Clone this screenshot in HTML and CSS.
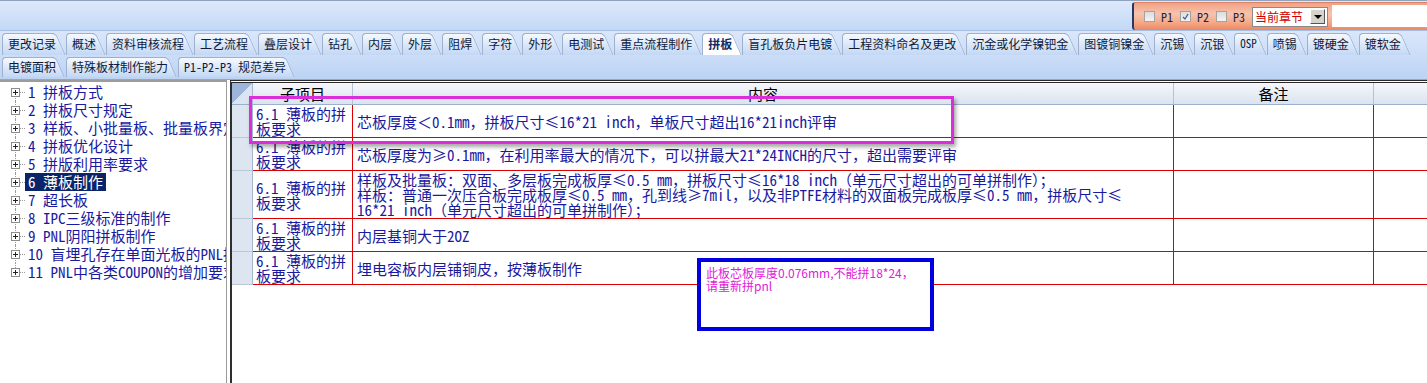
FILE: index.html
```html
<!DOCTYPE html>
<html lang="zh-CN">

<head>
    <meta charset="UTF-8">
    <title>拼板</title>
    <link rel="stylesheet" href="styles.css">
</head>

<body>
    <div class="topbar">
        <div class="filter">
            <label class="chk"><span class="box"></span><span class="en">P1</span></label>
            <label class="chk"><span class="box checked"><svg viewBox="0 0 9 9" width="9" height="9"><polyline points="2,5 4,7 7,2" fill="none" stroke="#4a5f8a" stroke-width="1.3"/></svg></span><span class="en">P2</span></label>
            <label class="chk"><span class="box"></span><span class="en">P3</span></label>
            <div class="chapter"><span>当前章节</span><span class="drop"></span></div>
            <div class="search"></div>
        </div>
    </div>

    <div class="tabs">
        <div class="tab-row">
            <span class="tab">更改记录</span>
            <span class="tab">概述</span>
            <span class="tab">资料审核流程</span>
            <span class="tab">工艺流程</span>
            <span class="tab">叠层设计</span>
            <span class="tab">钻孔</span>
            <span class="tab">内层</span>
            <span class="tab">外层</span>
            <span class="tab">阻焊</span>
            <span class="tab">字符</span>
            <span class="tab">外形</span>
            <span class="tab">电测试</span>
            <span class="tab">重点流程制作</span>
            <span class="tab active">拼板</span>
            <span class="tab">盲孔板负片电镀</span>
            <span class="tab">工程资料命名及更改</span>
            <span class="tab">沉金或化学镍钯金</span>
            <span class="tab">图镀铜镍金</span>
            <span class="tab">沉锡</span>
            <span class="tab">沉银</span>
            <span class="tab small"><span class="en">OSP</span></span>
            <span class="tab">喷锡</span>
            <span class="tab">镀硬金</span>
            <span class="tab">镀软金</span>
        </div>
        <div class="tab-row low">
            <span class="tab">电镀面积</span>
            <span class="tab">特殊板材制作能力</span>
            <span class="tab"><span class="en">P1-P2-P3 </span>规范差异</span>
        </div>
    </div>

    <div class="main">
        <ul class="tree">
            <li><span class="tg"></span><span class="dots"></span><span class="lbl"><span class="en">1 </span>拼板方式</span></li>
            <li><span class="tg"></span><span class="dots"></span><span class="lbl"><span class="en">2 </span>拼板尺寸规定</span></li>
            <li><span class="tg"></span><span class="dots"></span><span class="lbl"><span class="en">3 </span>样板、小批量板、批量板界定</span></li>
            <li><span class="tg"></span><span class="dots"></span><span class="lbl"><span class="en">4 </span>拼板优化设计</span></li>
            <li><span class="tg"></span><span class="dots"></span><span class="lbl"><span class="en">5 </span>拼版利用率要求</span></li>
            <li><span class="tg"></span><span class="dots"></span><span class="lbl selected"><span class="en">6 </span>薄板制作</span></li>
            <li><span class="tg"></span><span class="dots"></span><span class="lbl"><span class="en">7 </span>超长板</span></li>
            <li><span class="tg"></span><span class="dots"></span><span class="lbl"><span class="en">8 IPC</span>三级标准的制作</span></li>
            <li><span class="tg"></span><span class="dots"></span><span class="lbl"><span class="en">9 PNL</span>阴阳拼板制作</span></li>
            <li><span class="tg"></span><span class="dots"></span><span class="lbl"><span class="en">10 </span>盲埋孔存在单面光板的<span class="en">PNL</span>拼板</span></li>
            <li><span class="tg"></span><span class="dots"></span><span class="lbl"><span class="en">11 PNL</span>中各类<span class="en">COUPON</span>的增加要求</span></li>
        </ul>

        <div class="grid-wrap">
            <div class="grid">
                <div class="corner"></div>
                <div class="hc">子项目</div>
                <div class="hc">内容</div>
                <div class="hc">备注</div>
                <div class="hc last"></div>

                <div class="rh"></div>
                <div class="c sub"><div><span class="en">6.1 </span>薄板的拼<br>板要求</div></div>
                <div class="c txt"><div>芯板厚度＜<span class="en">0.1mm</span>，拼板尺寸≤<span class="en">16*21 inch</span>，单板尺寸超出<span class="en">16*21inch</span>评审</div></div>
                <div class="c"></div>
                <div class="c last"></div>

                <div class="rh"></div>
                <div class="c sub"><div><span class="en">6.1 </span>薄板的拼<br>板要求</div></div>
                <div class="c txt"><div>芯板厚度为≥<span class="en">0.1mm</span>，在利用率最大的情况下，可以拼最大<span class="en">21*24INCH</span>的尺寸，超出需要评审</div></div>
                <div class="c"></div>
                <div class="c last"></div>

                <div class="rh"></div>
                <div class="c sub"><div><span class="en">6.1 </span>薄板的拼<br>板要求</div></div>
                <div class="c txt"><div>样板及批量板：双面、多层板完成板厚≤<span class="en">0.5 mm</span>，拼板尺寸≤<span class="en">16*18 inch</span>（单元尺寸超出的可单拼制作）；<br>样板：普通一次压合板完成板厚≤<span class="en">0.5 mm</span>，孔到线≥<span class="en">7mil</span>，以及非<span class="en">PTFE</span>材料的双面板完成板厚≤<span class="en">0.5 mm</span>，拼板尺寸≤<br><span class="en">16*21 inch</span>（单元尺寸超出的可单拼制作）；</div></div>
                <div class="c"></div>
                <div class="c last"></div>

                <div class="rh"></div>
                <div class="c sub"><div><span class="en">6.1 </span>薄板的拼<br>板要求</div></div>
                <div class="c txt"><div>内层基铜大于<span class="en">2OZ</span></div></div>
                <div class="c"></div>
                <div class="c last"></div>

                <div class="rh"></div>
                <div class="c sub"><div><span class="en">6.1 </span>薄板的拼<br>板要求</div></div>
                <div class="c txt"><div>埋电容板内层铺铜皮，按薄板制作</div></div>
                <div class="c"></div>
                <div class="c last"></div>
            </div>

            <div class="mark"></div>
            <div class="note">此板芯板厚度0.076mm,不能拼18*24，<br>请重新拼pnl</div>
        </div>
    </div>
</body>

</html>
```

FILE: styles.css
```css
body {
    margin: 0;
    width: 1427px;
    height: 383px;
    overflow: hidden;
    background: #fff;
    font-family: "Noto Sans CJK SC", sans-serif;
}

/* latin runs use the half-width forms, like the old bitmap font */
.en {
    font-feature-settings: "hwid";
}

/* top bar */
.topbar {
    height: 29px;
    border-top: 1px solid #8fa2c0;
    border-bottom: 1px solid #a5bee2;
    background: linear-gradient(#dde9fb, #c3d8f6);
    display: flex;
    justify-content: flex-end;
    align-items: flex-end;
}

.filter {
    width: 283px;
    height: 27px;
    padding-left: 10px;
    border-left: 2px solid #22396a;
    border-top: 1px solid #d88466;
    border-radius: 3px 0 0 3px;
    background: linear-gradient(#f2a184 0%, #f7c3ad 40%, #f5ab8c 70%, #ec8861 100%);
    display: flex;
    align-items: center;
    font-size: 12px;
    color: #1d2440;
}

.chk {
    display: flex;
    align-items: center;
    margin-right: 7px;
}

.box {
    width: 9px;
    height: 9px;
    margin-right: 6px;
    border: 1px solid #a2a2a2;
    background: linear-gradient(#dcdcdc, #f4f4f4);
    display: flex;
}

.chapter {
    width: 72px;
    height: 18px;
    border: 1px solid #8a8a8a;
    background: #fff;
    display: flex;
    align-items: center;
    justify-content: space-between;
    color: #d00000;
    font-size: 12px;
    padding-left: 2px;
}

.drop {
    width: 13px;
    height: 13px;
    margin-right: 2px;
    background: #d6d3cc;
    border: 1px solid;
    border-color: #fff #555 #555 #fff;
    position: relative;
}

.drop::after {
    content: "";
    position: absolute;
    left: 3px;
    top: 5px;
    border-left: 4px solid transparent;
    border-right: 4px solid transparent;
    border-top: 4px solid #000;
}

.search {
    flex: 1;
    height: 22px;
    margin-left: 4px;
    align-self: flex-start;
    margin-top: 2px;
    background: #fff;
}

/* tab strip */
.tabs {
    height: 46px;
    padding-top: 2px;
    border-bottom: 1px solid #90a8cb;
    background: linear-gradient(#dae7fb, #bcd3f4);
    overflow: hidden;
}

.tab-row {
    display: flex;
    height: 22px;
    padding-left: 2px;
    white-space: nowrap;
}

.tab-row.low {
    height: 20px;
    margin-top: 2px;
}

.tab {
    --tabbg: linear-gradient(#f6f9fe, #d9e6f9 55%, #c3d8f5);
    position: relative;
    z-index: 0;
    padding: 0 10px 0 6px;
    font-size: 12px;
    line-height: 21px;
    color: #0f1a38;
}

.low .tab {
    line-height: 19px;
}

.tab::before {
    content: "";
    position: absolute;
    left: 0;
    top: 0;
    bottom: 0;
    right: 12px;
    border-left: 1px solid #9eb0cc;
    border-top: 1px solid #9eb0cc;
    border-radius: 4px 0 0 0;
    background: var(--tabbg);
    z-index: -1;
}

.tab::after {
    content: "";
    position: absolute;
    right: 10px;
    width: 14px;
    top: 0;
    bottom: 0;
    border-top: 1px solid #9eb0cc;
    border-right: 1px solid #9eb0cc;
    border-radius: 0 5px 0 0;
    background: var(--tabbg);
    transform: skewX(24deg);
    transform-origin: top;
    z-index: -1;
}

.tab.active {
    --tabbg: #fff;
    font-weight: bold;
    color: #102a66;
}

.tab.small {
    font-size: 11px;
}

/* main area */
.main {
    display: flex;
    height: 305px;
}

.tree {
    list-style: none;
    margin: 0;
    padding: 1px 0 0 0;
    width: 226px;
    flex: none;
    border-top: 2px solid #9c9c9c;
    border-right: 1px solid #9c9c9c;
    overflow: hidden;
    white-space: nowrap;
}

.tree li {
    position: relative;
    height: 18px;
    display: flex;
    align-items: center;
    padding-left: 11px;
    font-size: 15px;
    color: #1a1aa0;
}

.tree li::before {
    content: "";
    position: absolute;
    left: 15px;
    top: 0;
    bottom: 0;
    border-left: 1px dotted #9a9a9a;
}

.tree li:first-child::before {
    top: 9px;
}

.tree li:last-child::before {
    bottom: 9px;
}

.tg {
    flex: none;
    width: 7px;
    height: 7px;
    border: 1px solid #8c8c8c;
    position: relative;
    z-index: 1;
    background:
        linear-gradient(#222, #222) center / 5px 1px no-repeat,
        linear-gradient(#222, #222) center / 1px 5px no-repeat,
        #fff;
}

.dots {
    flex: none;
    width: 5px;
    border-top: 1px dotted #9a9a9a;
}

.lbl {
    padding: 0 3px;
    line-height: 18px;
}

.lbl.selected {
    background: #0a246a;
    color: #fff;
}

.grid-wrap {
    position: relative;
    flex: 1;
    margin-left: 3px;
    border-left: 2px solid #2e2e2e;
    border-top: 3px double #2a2a2a;
}

.grid {
    display: grid;
    grid-template-columns: 21px 100px 821px 200px 1fr;
    grid-template-rows: 22px 33px 33px 48px 33px 33px;
}

.corner {
    border-right: 1px solid #a6b6ce;
    border-bottom: 1px solid #9cb0cc;
    background: linear-gradient(135deg, #9db5da 50%, #dbe4f1 50%);
}

.hc {
    border-right: 1px solid #b4c2d8;
    border-bottom: 1px solid #9cb0cc;
    background: linear-gradient(#f5f7fb, #dbe3ef);
    text-align: center;
    font-size: 15px;
    line-height: 21px;
    color: #000;
}

.hc.last {
    border-right: none;
}

.rh {
    background: #dde5f0;
    border-right: 1px solid #a6b6ce;
    border-bottom: 1px solid #bcc7da;
}

.c {
    border-right: 1px solid #dc0000;
    border-bottom: 1px solid #dc0000;
    display: flex;
    align-items: center;
    font-size: 15px;
    line-height: 15px;
    color: #1a1aa0;
    white-space: nowrap;
    overflow: hidden;
}

.c.last {
    border-right: none;
}

.c.sub {
    padding-left: 3px;
}

.c.txt {
    padding-left: 4px;
}

.mark {
    position: absolute;
    left: 17px;
    top: 13px;
    width: 705px;
    height: 48px;
    box-sizing: border-box;
    border: 3px solid #d92ed9;
    box-shadow: 2px 3px 4px rgba(0, 0, 0, 0.35);
}

.note {
    position: absolute;
    left: 465px;
    top: 175px;
    width: 237px;
    height: 73px;
    box-sizing: border-box;
    border: 4px solid #0000e0;
    background: #fff;
    padding: 4px 0 0 5px;
    font-size: 12px;
    line-height: 13px;
    color: #e020d8;
}
```
